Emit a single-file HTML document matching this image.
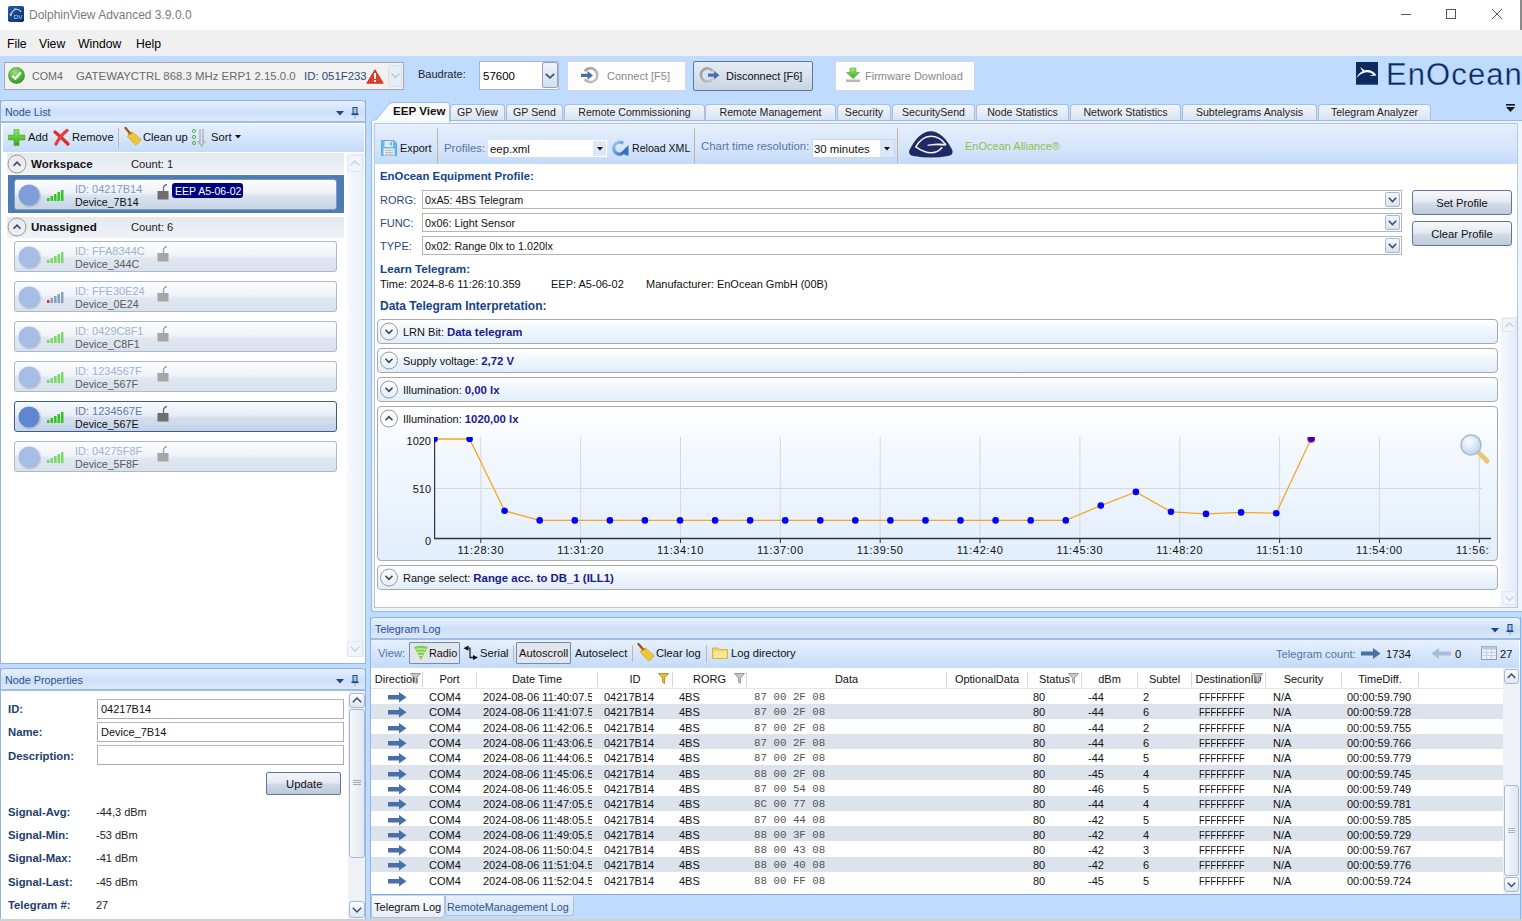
<!DOCTYPE html><html><head><meta charset="utf-8"><style>
*{margin:0;padding:0;box-sizing:border-box}
html,body{width:1522px;height:921px;overflow:hidden;background:#bfdbff;font-family:"Liberation Sans",sans-serif;font-size:11px;color:#000}
div{position:absolute}
.t{white-space:nowrap;line-height:14px;height:14px}
.b{font-weight:bold}
.blue{color:#15428b}
svg{position:absolute;overflow:visible}
</style></head><body><div style="left:0px;top:0px;width:1522px;height:30px;background:#fff"></div><div style="left:1520px;top:0px;width:2px;height:30px;background:#8a8a8a"></div><svg style="left:8px;top:6px" width="16" height="16" viewBox="0 0 16 16"><defs><linearGradient id="gic" x1="0" y1="0" x2="1" y2="1"><stop offset="0" stop-color="#2a5aa0"/><stop offset="1" stop-color="#00307a"/></linearGradient></defs><path d="M1.3 0 H14.7 L16 1.3 V14.7 L14.7 16 H1.3 L0 14.7 V1.3 Z" fill="url(#gic)"/><path d="M2.5 8.8 Q5.5 3 9 3.3 Q12 3.6 13 6" fill="none" stroke="#dfe8f4" stroke-width="1.1"/><path d="M1.3 8.5 L3.8 8 L3.2 10.5 Z" fill="#dfe8f4"/><path d="M6.5 2.5 L8 3.5" stroke="#dfe8f4" stroke-width="1"/><text x="5.8" y="13.3" font-size="6.2" fill="#d0ddf0" font-family="Liberation Sans">DV</text></svg><div class="t" style="left:29px;top:8px;font-size:12px;color:#7a7a7a">DolphinView Advanced 3.9.0.0</div><div style="left:1401px;top:14px;width:10px;height:1px;background:#555"></div><div style="left:1446px;top:9px;width:10px;height:10px;border:1px solid #555"></div><svg style="left:1492px;top:9px" width="10" height="10"><path d="M0 0 L10 10 M10 0 L0 10" stroke="#555" stroke-width="1"/></svg><div style="left:0px;top:30px;width:1522px;height:26px;background:#f0f0f0"></div><div class="t" style="left:7px;top:36.5px;font-size:12.2px;color:#000">File</div><div class="t" style="left:39px;top:36.5px;font-size:12.2px;color:#000">View</div><div class="t" style="left:78px;top:36.5px;font-size:12.2px;color:#000">Window</div><div class="t" style="left:136px;top:36.5px;font-size:12.2px;color:#000">Help</div><div style="left:4px;top:62px;width:400px;height:28px;background:#f1f1f1;border:1px solid #a9a9a9"></div><svg style="left:8px;top:67px" width="17" height="17" viewBox="0 0 17 17"><defs><radialGradient id="gck" cx="0.4" cy="0.3" r="0.7"><stop offset="0" stop-color="#9de07a"/><stop offset="1" stop-color="#2e9e1e"/></radialGradient></defs><circle cx="8.5" cy="8.5" r="8" fill="url(#gck)" stroke="#3a8a2a" stroke-width="0.6"/><path d="M4.2 8.8 L7.3 11.6 L12.8 5.6" fill="none" stroke="#fff" stroke-width="2.2"/></svg><div class="t" style="left:32px;top:69px;color:#6a6a6a;font-size:10.7px">COM4</div><div class="t" style="left:76px;top:69px;color:#6a6a6a;font-size:11.4px">GATEWAYCTRL 868.3 MHz ERP1 2.15.0.0</div><div class="t" style="left:304px;top:69px;color:#2a4a80;font-size:11.4px">ID: 051F233</div><svg style="left:366px;top:69px" width="18" height="15" viewBox="0 0 18 15"><path d="M9 0.8 L17.2 14.2 L0.8 14.2 Z" fill="#e8382c" stroke="#c01a12" stroke-width="0.8" stroke-linejoin="round"/><rect x="8" y="4" width="2" height="6" fill="#fff"/><rect x="8" y="11" width="2" height="2" fill="#fff"/></svg><div style="left:388px;top:65px;width:14px;height:22px;background:#e6edf7;border:1px solid #d5deea;border-radius:2px"></div><svg style="left:391px;top:73px" width="9" height="6"><path d="M0.5 0.5 L4.5 4.5 L8.5 0.5" fill="none" stroke="#b8c4d4" stroke-width="1.3"/></svg><div class="t" style="left:418px;top:66.5px;color:#1e1e1e;font-size:11px">Baudrate:</div><div style="left:479px;top:61px;width:80px;height:29px;background:#fff;border:1px solid #a9b6c8"></div><div class="t" style="left:483px;top:69px;font-size:11.5px">57600</div><div style="left:542px;top:62px;width:16px;height:26px;background:linear-gradient(#eef3fa,#d3dff0);border:1px solid #8ea3c0;border-radius:2px"></div><svg style="left:545px;top:73px" width="10" height="6"><path d="M0.8 0.8 L5 4.8 L9.2 0.8" fill="none" stroke="#3c4e6a" stroke-width="1.6"/></svg><div style="left:567px;top:61px;width:119px;height:30px;background:#fdfdfe;border:1px solid #d3d9e2;border-radius:2px"></div><svg style="left:0;top:0" width="1522" height="100"><defs><linearGradient id="gring" x1="0" y1="0" x2="1" y2="1"><stop offset="0" stop-color="#9a9a9a"/><stop offset="1" stop-color="#c8c8c8"/></linearGradient></defs><path d="M584.75 71.24 A6.9 6.9 0 1 1 584.75 79.16" fill="none" stroke="url(#gring)" stroke-width="2.6"/><path d="M581 73.8 H587.5 V71 L593 75.4 L587.5 79.8 V77 H581 Z" fill="#4a70ac"/></svg><div class="t" style="left:607px;top:69px;color:#8a8a8a;font-size:11px">Connect [F5]</div><div style="left:693px;top:61px;width:120px;height:30px;background:linear-gradient(#e6ecf4,#c9d5e6);border:1px solid #5d7699;border-radius:2px"></div><svg style="left:0;top:0" width="1522" height="100"><path d="M712.91 78.79 A6.6 6.6 0 1 1 712.91 71.21" fill="none" stroke="url(#gring)" stroke-width="2.6"/><path d="M708 73.6 H714 V70.8 L719.5 75.2 L714 79.6 V76.8 H708 Z" fill="#4a70ac"/></svg><div class="t" style="left:726px;top:69px;color:#111;font-size:11px">Disconnect [F6]</div><div style="left:835px;top:61px;width:140px;height:30px;background:#fdfdfe;border:1px solid #d3d9e2;border-radius:2px"></div><svg style="left:845px;top:67px" width="16" height="16" viewBox="0 0 16 16"><defs><linearGradient id="gfw" x1="0" y1="0" x2="0" y2="1"><stop offset="0" stop-color="#a8e878"/><stop offset="1" stop-color="#3aa820"/></linearGradient></defs><path d="M5 1 L11 1 L11 5.5 L14.5 5.5 L8 11.5 L1.5 5.5 L5 5.5 Z" fill="url(#gfw)" stroke="#3a9a22" stroke-width="0.5"/><rect x="1" y="12.5" width="14" height="2.5" fill="#b8b8b8"/></svg><div class="t" style="left:865px;top:69px;color:#8a8a8a;font-size:11px">Firmware Download</div><svg style="left:1356px;top:62px" width="23" height="23" viewBox="0 0 23 23"><rect x="0" y="0" width="22" height="22.7" fill="#0a2a60"/><path d="M0.3 16.5 Q3 9 10 8 Q17 7.5 20.5 13.5 L14 14 Q15.5 12.5 17.5 12.5 Q13.5 9.5 9 10.5 Q3.5 12 0.3 16.5 Z" fill="#fff"/><path d="M4 5 L9 8.5 L6.5 9.2 Z" fill="#fff"/></svg><div class="t" style="left:1386px;top:57.5px;height:34px;line-height:34px;font-size:31px;color:#0a2a60;letter-spacing:1.1px;-webkit-text-stroke:0.35px #bfdbff">EnOcean</div><div style="left:0px;top:100px;width:366px;height:564px;background:#fff;border:1px solid #92b4e0;border-top:none"></div><div style="left:0px;top:100px;width:366px;height:23px;background:linear-gradient(#e6f0fd 0%,#dae8fb 30%,#cddff8 55%,#dbe8fa 100%);border:1px solid #8fb1dd;border-bottom:2px solid #9dbde6;border-radius:4px 4px 0 0"></div><div class="t" style="left:5px;top:105px;color:#2d5590;font-size:10.8px">Node List</div><svg style="left:336px;top:111px" width="8" height="5"><path d="M0 0 L8 0 L4 4.5 Z" fill="#1d4a85"/></svg><svg style="left:351px;top:107px" width="8" height="12"><rect x="2" y="0.5" width="4" height="6.5" fill="#a9c1e0" stroke="#1d4a85" stroke-width="1"/><rect x="0.5" y="6.5" width="7" height="1.6" fill="#1d4a85"/><rect x="3.6" y="8" width="0.9" height="3.5" fill="#8fa6c4"/></svg><div style="left:3px;top:124px;width:361px;height:28px;background:linear-gradient(#e7f0fd,#c4dbf8)"></div><svg style="left:8px;top:129px" width="18" height="17" viewBox="0 0 18 17"><defs><linearGradient id="gpl" x1="0" y1="0" x2="0" y2="1"><stop offset="0" stop-color="#8ee85a"/><stop offset="1" stop-color="#36a81c"/></linearGradient></defs><path d="M6 0.5 H11 V6 H17 V11 H11 V16.5 H6 V11 H0.5 V6 H6 Z" fill="url(#gpl)" stroke="#3a9a22" stroke-width="0.5"/></svg><div class="t" style="left:28px;top:130px;font-size:11.2px;color:#111">Add</div><svg style="left:53px;top:129px" width="17" height="17" viewBox="0 0 17 17"><path d="M2 3 Q8 8 15 15" stroke="#e02a2a" stroke-width="3.2" fill="none" stroke-linecap="round"/><path d="M14 1.5 Q7 7 3 15" stroke="#e83a3a" stroke-width="3.2" fill="none" stroke-linecap="round"/></svg><div class="t" style="left:72px;top:130px;font-size:11.2px;color:#111">Remove</div><div style="left:118px;top:128px;width:1px;height:21px;background:#c8b896"></div><svg style="left:124px;top:127px" width="18" height="19" viewBox="0 0 18 19"><path d="M1.5 1 L7 7.5" stroke="#9a5a1a" stroke-width="2.4" stroke-linecap="round"/><path d="M5 6.5 L8.5 5 L17 12.5 Q15 16.5 11.5 18 L3.5 9.5 Z" fill="#f2cc38" stroke="#b8901a" stroke-width="0.6"/><path d="M6 10 L13 16 M8 8 L15 14" stroke="#d8a820" stroke-width="0.6"/><path d="M4.5 7.5 L8 5.8" stroke="#d05a20" stroke-width="1.3"/></svg><div class="t" style="left:143px;top:130px;font-size:11.2px;color:#111">Clean up</div><svg style="left:191px;top:128px" width="17" height="19" viewBox="0 0 17 19"><circle cx="3" cy="3" r="1.6" fill="none" stroke="#5ab43c" stroke-width="1"/><circle cx="3" cy="9" r="1.6" fill="none" stroke="#5ab43c" stroke-width="1"/><circle cx="3" cy="15" r="1.6" fill="none" stroke="#5ab43c" stroke-width="1"/><path d="M9 1 V14 M12 1 V14" stroke="#b0b0b0" stroke-width="1.4"/><path d="M7 13 L10.5 18 L14 13" fill="none" stroke="#b0b0b0" stroke-width="1.4"/></svg><div class="t" style="left:211px;top:130px;font-size:11.2px;color:#111">Sort</div><svg style="left:235px;top:135px" width="6" height="4"><path d="M0 0 L6 0 L3 3.5 Z" fill="#111"/></svg><div style="left:7px;top:153px;width:337px;height:21px;background:linear-gradient(#e4e9f0,#eef2f7)"></div><svg style="left:0;top:0" width="1522" height="921"><circle cx="17" cy="164" r="9" fill="none" stroke="#9a9a9a" stroke-width="1"/><path d="M13.5 165.8 L17 162.2 L20.5 165.8" fill="none" stroke="#444" stroke-width="1.6"/></svg><div class="t" style="left:31px;top:157px;font-weight:bold;font-size:11.6px;color:#111">Workspace</div><div class="t" style="left:131px;top:157px;font-size:11.2px;color:#222">Count: 1</div><div style="left:7px;top:217px;width:337px;height:21px;background:linear-gradient(#e4e9f0,#eef2f7)"></div><svg style="left:0;top:0" width="1522" height="921"><circle cx="17" cy="227" r="9" fill="none" stroke="#9a9a9a" stroke-width="1"/><path d="M13.5 228.8 L17 225.2 L20.5 228.8" fill="none" stroke="#444" stroke-width="1.6"/></svg><div class="t" style="left:31px;top:220px;font-weight:bold;font-size:11.6px;color:#111">Unassigned</div><div class="t" style="left:131px;top:220px;font-size:11.2px;color:#222">Count: 6</div><div style="left:8px;top:175px;width:336px;height:38px;background:#4e7bb4"></div><div style="left:14px;top:179px;width:323px;height:31px;background:linear-gradient(#fbfcfe 0%,#eef2f8 45%,#d9e2ee 55%,#c8d4e4 100%);border:1px solid #7d9ac2;border-radius:3px"></div><svg style="left:18px;top:184px" width="24" height="24"><defs><filter id="sh179" x="-20%" y="-20%" width="150%" height="150%"><feDropShadow dx="1" dy="1" stdDeviation="0.8" flood-color="#7a8aa0" flood-opacity="0.6"/></filter></defs><circle cx="11" cy="11" r="10.5" fill="#7f9fd8" filter="url(#sh179)"/></svg><svg style="left:47px;top:189px" width="18" height="12"><rect x="0.0" y="9" width="2.5" height="3" fill="#30c820"/><rect x="3.5" y="7" width="2.5" height="5" fill="#30c820"/><rect x="7.0" y="5" width="2.5" height="7" fill="#30c820"/><rect x="10.5" y="3" width="2.5" height="9" fill="#30c820"/><rect x="14.0" y="1" width="2.5" height="11" fill="#30c820"/></svg><div class="t" style="left:75px;top:181.5px;color:#8199c2;font-size:11px">ID: 04217B14</div><div class="t" style="left:75px;top:194.5px;color:#111;font-size:10.7px">Device_7B14</div><svg style="left:157px;top:184px" width="12" height="16" viewBox="0 0 12 16"><path d="M6.5 7 V3.5 Q7 1 10 0.5" fill="none" stroke="#6e6e6e" stroke-width="1.3"/><rect x="0.5" y="7" width="11" height="8.5" fill="#6e6e6e"/></svg><div style="left:172px;top:183px;width:71px;height:15px;background:#00007f;border-radius:3px"></div><div class="t" style="left:175px;top:183.5px;color:#fff;font-size:10.5px">EEP A5-06-02</div><div style="left:14px;top:241px;width:323px;height:31px;background:linear-gradient(#fbfcfe 0%,#f1f4f9 45%,#e2e8f1 55%,#d9e1ec 100%);border:1px solid #a9b9d0;border-radius:3px"></div><svg style="left:18px;top:246px" width="24" height="24"><defs><filter id="sh241" x="-20%" y="-20%" width="150%" height="150%"><feDropShadow dx="1" dy="1" stdDeviation="0.8" flood-color="#7a8aa0" flood-opacity="0.6"/></filter></defs><circle cx="11" cy="11" r="10.5" fill="#a6bde6" filter="url(#sh241)"/></svg><svg style="left:47px;top:251px" width="18" height="12"><rect x="0.0" y="9" width="2.5" height="3" fill="#7ad86a"/><rect x="3.5" y="7" width="2.5" height="5" fill="#7ad86a"/><rect x="7.0" y="5" width="2.5" height="7" fill="#7ad86a"/><rect x="10.5" y="3" width="2.5" height="9" fill="#7ad86a"/><rect x="14.0" y="1" width="2.5" height="11" fill="#7ad86a"/></svg><div class="t" style="left:75px;top:243.5px;color:#a0b2d0;font-size:11px">ID: FFA8344C</div><div class="t" style="left:75px;top:256.5px;color:#5a5a5a;font-size:10.7px">Device_344C</div><svg style="left:157px;top:246px" width="12" height="16" viewBox="0 0 12 16"><path d="M6.5 7 V3.5 Q7 1 10 0.5" fill="none" stroke="#a6a6a6" stroke-width="1.3"/><rect x="0.5" y="7" width="11" height="8.5" fill="#a6a6a6"/></svg><div style="left:14px;top:281px;width:323px;height:31px;background:linear-gradient(#fbfcfe 0%,#f1f4f9 45%,#e2e8f1 55%,#d9e1ec 100%);border:1px solid #a9b9d0;border-radius:3px"></div><svg style="left:18px;top:286px" width="24" height="24"><defs><filter id="sh281" x="-20%" y="-20%" width="150%" height="150%"><feDropShadow dx="1" dy="1" stdDeviation="0.8" flood-color="#7a8aa0" flood-opacity="0.6"/></filter></defs><circle cx="11" cy="11" r="10.5" fill="#a6bde6" filter="url(#sh281)"/></svg><svg style="left:47px;top:291px" width="18" height="12"><rect x="0.0" y="9" width="2.5" height="3" fill="#e03030"/><rect x="3.5" y="7" width="2.5" height="5" fill="#8aa0c0"/><rect x="7.0" y="5" width="2.5" height="7" fill="#8aa0c0"/><rect x="10.5" y="3" width="2.5" height="9" fill="#8aa0c0"/><rect x="14.0" y="1" width="2.5" height="11" fill="#8aa0c0"/></svg><div class="t" style="left:75px;top:283.5px;color:#a0b2d0;font-size:11px">ID: FFE30E24</div><div class="t" style="left:75px;top:296.5px;color:#5a5a5a;font-size:10.7px">Device_0E24</div><svg style="left:157px;top:286px" width="12" height="16" viewBox="0 0 12 16"><path d="M6.5 7 V3.5 Q7 1 10 0.5" fill="none" stroke="#a6a6a6" stroke-width="1.3"/><rect x="0.5" y="7" width="11" height="8.5" fill="#a6a6a6"/></svg><div style="left:14px;top:321px;width:323px;height:31px;background:linear-gradient(#fbfcfe 0%,#f1f4f9 45%,#e2e8f1 55%,#d9e1ec 100%);border:1px solid #a9b9d0;border-radius:3px"></div><svg style="left:18px;top:326px" width="24" height="24"><defs><filter id="sh321" x="-20%" y="-20%" width="150%" height="150%"><feDropShadow dx="1" dy="1" stdDeviation="0.8" flood-color="#7a8aa0" flood-opacity="0.6"/></filter></defs><circle cx="11" cy="11" r="10.5" fill="#a6bde6" filter="url(#sh321)"/></svg><svg style="left:47px;top:331px" width="18" height="12"><rect x="0.0" y="9" width="2.5" height="3" fill="#7ad86a"/><rect x="3.5" y="7" width="2.5" height="5" fill="#7ad86a"/><rect x="7.0" y="5" width="2.5" height="7" fill="#7ad86a"/><rect x="10.5" y="3" width="2.5" height="9" fill="#7ad86a"/><rect x="14.0" y="1" width="2.5" height="11" fill="#7ad86a"/></svg><div class="t" style="left:75px;top:323.5px;color:#a0b2d0;font-size:11px">ID: 0429C8F1</div><div class="t" style="left:75px;top:336.5px;color:#5a5a5a;font-size:10.7px">Device_C8F1</div><svg style="left:157px;top:326px" width="12" height="16" viewBox="0 0 12 16"><path d="M6.5 7 V3.5 Q7 1 10 0.5" fill="none" stroke="#a6a6a6" stroke-width="1.3"/><rect x="0.5" y="7" width="11" height="8.5" fill="#a6a6a6"/></svg><div style="left:14px;top:361px;width:323px;height:31px;background:linear-gradient(#fbfcfe 0%,#f1f4f9 45%,#e2e8f1 55%,#d9e1ec 100%);border:1px solid #a9b9d0;border-radius:3px"></div><svg style="left:18px;top:366px" width="24" height="24"><defs><filter id="sh361" x="-20%" y="-20%" width="150%" height="150%"><feDropShadow dx="1" dy="1" stdDeviation="0.8" flood-color="#7a8aa0" flood-opacity="0.6"/></filter></defs><circle cx="11" cy="11" r="10.5" fill="#a6bde6" filter="url(#sh361)"/></svg><svg style="left:47px;top:371px" width="18" height="12"><rect x="0.0" y="9" width="2.5" height="3" fill="#7ad86a"/><rect x="3.5" y="7" width="2.5" height="5" fill="#7ad86a"/><rect x="7.0" y="5" width="2.5" height="7" fill="#7ad86a"/><rect x="10.5" y="3" width="2.5" height="9" fill="#7ad86a"/><rect x="14.0" y="1" width="2.5" height="11" fill="#7ad86a"/></svg><div class="t" style="left:75px;top:363.5px;color:#a0b2d0;font-size:11px">ID: 1234567F</div><div class="t" style="left:75px;top:376.5px;color:#5a5a5a;font-size:10.7px">Device_567F</div><svg style="left:157px;top:366px" width="12" height="16" viewBox="0 0 12 16"><path d="M6.5 7 V3.5 Q7 1 10 0.5" fill="none" stroke="#a6a6a6" stroke-width="1.3"/><rect x="0.5" y="7" width="11" height="8.5" fill="#a6a6a6"/></svg><div style="left:14px;top:401px;width:323px;height:31px;background:linear-gradient(#f6f9fd 0%,#e8eef7 45%,#d4dfee 55%,#c4d3e8 100%);border:1px solid #3d5c8c;border-radius:3px"></div><svg style="left:18px;top:406px" width="24" height="24"><defs><filter id="sh401" x="-20%" y="-20%" width="150%" height="150%"><feDropShadow dx="1" dy="1" stdDeviation="0.8" flood-color="#7a8aa0" flood-opacity="0.6"/></filter></defs><circle cx="11" cy="11" r="10.5" fill="#5f86d0" filter="url(#sh401)"/></svg><svg style="left:47px;top:411px" width="18" height="12"><rect x="0.0" y="9" width="2.5" height="3" fill="#30c820"/><rect x="3.5" y="7" width="2.5" height="5" fill="#30c820"/><rect x="7.0" y="5" width="2.5" height="7" fill="#30c820"/><rect x="10.5" y="3" width="2.5" height="9" fill="#30c820"/><rect x="14.0" y="1" width="2.5" height="11" fill="#30c820"/></svg><div class="t" style="left:75px;top:403.5px;color:#5a78a8;font-size:11px">ID: 1234567E</div><div class="t" style="left:75px;top:416.5px;color:#111;font-size:10.7px">Device_567E</div><svg style="left:157px;top:406px" width="12" height="16" viewBox="0 0 12 16"><path d="M6.5 7 V3.5 Q7 1 10 0.5" fill="none" stroke="#6e6e6e" stroke-width="1.3"/><rect x="0.5" y="7" width="11" height="8.5" fill="#6e6e6e"/></svg><div style="left:14px;top:441px;width:323px;height:31px;background:linear-gradient(#fbfcfe 0%,#f1f4f9 45%,#e2e8f1 55%,#d9e1ec 100%);border:1px solid #a9b9d0;border-radius:3px"></div><svg style="left:18px;top:446px" width="24" height="24"><defs><filter id="sh441" x="-20%" y="-20%" width="150%" height="150%"><feDropShadow dx="1" dy="1" stdDeviation="0.8" flood-color="#7a8aa0" flood-opacity="0.6"/></filter></defs><circle cx="11" cy="11" r="10.5" fill="#a6bde6" filter="url(#sh441)"/></svg><svg style="left:47px;top:451px" width="18" height="12"><rect x="0.0" y="9" width="2.5" height="3" fill="#7ad86a"/><rect x="3.5" y="7" width="2.5" height="5" fill="#7ad86a"/><rect x="7.0" y="5" width="2.5" height="7" fill="#7ad86a"/><rect x="10.5" y="3" width="2.5" height="9" fill="#7ad86a"/><rect x="14.0" y="1" width="2.5" height="11" fill="#7ad86a"/></svg><div class="t" style="left:75px;top:443.5px;color:#a0b2d0;font-size:11px">ID: 04275F8F</div><div class="t" style="left:75px;top:456.5px;color:#5a5a5a;font-size:10.7px">Device_5F8F</div><svg style="left:157px;top:446px" width="12" height="16" viewBox="0 0 12 16"><path d="M6.5 7 V3.5 Q7 1 10 0.5" fill="none" stroke="#a6a6a6" stroke-width="1.3"/><rect x="0.5" y="7" width="11" height="8.5" fill="#a6a6a6"/></svg><div style="left:347px;top:153px;width:17px;height:504px;background:linear-gradient(90deg,#f7f9fd,#e9eff8)"></div><div style="left:347px;top:155px;width:16px;height:17px;background:#f1f5fb;border:1px solid #dde6f2;border-radius:2px"></div><svg style="left:350px;top:160px" width="10" height="6"><path d="M0.5 5.5 L5 1 L9.5 5.5" fill="none" stroke="#c5d2e4" stroke-width="1.4"/></svg><div style="left:347px;top:641px;width:16px;height:16px;background:#f1f5fb;border:1px solid #dde6f2;border-radius:2px"></div><svg style="left:350px;top:646px" width="10" height="6"><path d="M0.5 0.5 L5 5 L9.5 0.5" fill="none" stroke="#c5d2e4" stroke-width="1.4"/></svg><div style="left:0px;top:668px;width:366px;height:253px;background:#fff;border:1px solid #92b4e0;border-top:none"></div><div style="left:0px;top:668px;width:366px;height:23px;background:linear-gradient(#e6f0fd 0%,#dae8fb 30%,#cddff8 55%,#dbe8fa 100%);border:1px solid #8fb1dd;border-bottom:2px solid #9dbde6;border-radius:4px 4px 0 0"></div><div class="t" style="left:5px;top:673px;color:#2d5590;font-size:10.8px">Node Properties</div><svg style="left:336px;top:679px" width="8" height="5"><path d="M0 0 L8 0 L4 4.5 Z" fill="#1d4a85"/></svg><svg style="left:351px;top:675px" width="8" height="12"><rect x="2" y="0.5" width="4" height="6.5" fill="#a9c1e0" stroke="#1d4a85" stroke-width="1"/><rect x="0.5" y="6.5" width="7" height="1.6" fill="#1d4a85"/><rect x="3.6" y="8" width="0.9" height="3.5" fill="#8fa6c4"/></svg><div class="t" style="left:8px;top:702px;font-weight:bold;font-size:11.3px;color:#1e3e6e">ID:</div><div class="t" style="left:8px;top:725px;font-weight:bold;font-size:11.3px;color:#1e3e6e">Name:</div><div class="t" style="left:8px;top:748.5px;font-weight:bold;font-size:11.3px;color:#1e3e6e">Description:</div><div style="left:97px;top:699px;width:247px;height:20px;background:#fff;border:1px solid #abadb3;border-top-color:#b5b8c0"></div><div class="t" style="left:101px;top:702.0px;font-size:11px;color:#111">04217B14</div><div style="left:97px;top:722px;width:247px;height:20px;background:#fff;border:1px solid #abadb3;border-top-color:#b5b8c0"></div><div class="t" style="left:101px;top:725.0px;font-size:11px;color:#111">Device_7B14</div><div style="left:97px;top:745px;width:247px;height:20px;background:#fff;border:1px solid #abadb3;border-top-color:#b5b8c0"></div><div style="left:266px;top:772px;width:75px;height:23px;background:linear-gradient(#f4f6fa 0%,#e5eaf2 45%,#cfd9e6 55%,#bccadc 100%);border:1px solid #5d7699;border-radius:2px"></div><div class="t" style="left:286px;top:776.5px;font-size:11.3px;color:#111">Update</div><div class="t" style="left:8px;top:805px;font-weight:bold;font-size:11.3px;color:#1e3e6e">Signal-Avg:</div><div class="t" style="left:96px;top:805px;font-size:11px;color:#222">-44,3 dBm</div><div class="t" style="left:8px;top:828px;font-weight:bold;font-size:11.3px;color:#1e3e6e">Signal-Min:</div><div class="t" style="left:96px;top:828px;font-size:11px;color:#222">-53 dBm</div><div class="t" style="left:8px;top:851px;font-weight:bold;font-size:11.3px;color:#1e3e6e">Signal-Max:</div><div class="t" style="left:96px;top:851px;font-size:11px;color:#222">-41 dBm</div><div class="t" style="left:8px;top:875px;font-weight:bold;font-size:11.3px;color:#1e3e6e">Signal-Last:</div><div class="t" style="left:96px;top:875px;font-size:11px;color:#222">-45 dBm</div><div class="t" style="left:8px;top:898px;font-weight:bold;font-size:11.3px;color:#1e3e6e">Telegram #:</div><div class="t" style="left:96px;top:898px;font-size:11px;color:#222">27</div><div style="left:348px;top:691px;width:17px;height:229px;background:#eef2f7"></div><div style="left:349px;top:693px;width:16px;height:15px;background:linear-gradient(#fbfcfe,#dde6f2);border:1px solid #a9b9d0;border-radius:3px"></div><svg style="left:352px;top:697px" width="10" height="6"><path d="M0.8 5.2 L5 1 L9.2 5.2" fill="none" stroke="#3c4e6a" stroke-width="1.5"/></svg><div style="left:349px;top:709px;width:16px;height:149px;background:linear-gradient(90deg,#f6f8fc,#dfe7f2);border:1px solid #a9b9d0;border-radius:3px"></div><svg style="left:353px;top:780px" width="8" height="6"><path d="M0 0.5 H8 M0 2.5 H8 M0 4.5 H8" stroke="#8a9ab0" stroke-width="0.8"/></svg><div style="left:349px;top:901px;width:16px;height:17px;background:linear-gradient(#fbfcfe,#dde6f2);border:1px solid #a9b9d0;border-radius:3px"></div><svg style="left:352px;top:907px" width="10" height="6"><path d="M0.8 0.8 L5 5 L9.2 0.8" fill="none" stroke="#3c4e6a" stroke-width="1.5"/></svg><div style="left:450px;top:104px;width:55px;height:17px;background:linear-gradient(#f2f6fc 0%,#e4ecf8 50%,#d6e2f3 100%);border:1px solid #a5bfdf;border-bottom:none;border-radius:4px 4px 0 0"></div><div class="t" style="left:450px;top:105px;width:55px;text-align:center;font-size:10.6px;color:#1e1e1e;line-height:15px">GP View</div><div style="left:506px;top:104px;width:57px;height:17px;background:linear-gradient(#f2f6fc 0%,#e4ecf8 50%,#d6e2f3 100%);border:1px solid #a5bfdf;border-bottom:none;border-radius:4px 4px 0 0"></div><div class="t" style="left:506px;top:105px;width:57px;text-align:center;font-size:10.6px;color:#1e1e1e;line-height:15px">GP Send</div><div style="left:564px;top:104px;width:141px;height:17px;background:linear-gradient(#f2f6fc 0%,#e4ecf8 50%,#d6e2f3 100%);border:1px solid #a5bfdf;border-bottom:none;border-radius:4px 4px 0 0"></div><div class="t" style="left:564px;top:105px;width:141px;text-align:center;font-size:10.6px;color:#1e1e1e;line-height:15px">Remote Commissioning</div><div style="left:705px;top:104px;width:131px;height:17px;background:linear-gradient(#f2f6fc 0%,#e4ecf8 50%,#d6e2f3 100%);border:1px solid #a5bfdf;border-bottom:none;border-radius:4px 4px 0 0"></div><div class="t" style="left:705px;top:105px;width:131px;text-align:center;font-size:10.6px;color:#1e1e1e;line-height:15px">Remote Management</div><div style="left:837px;top:104px;width:54px;height:17px;background:linear-gradient(#f2f6fc 0%,#e4ecf8 50%,#d6e2f3 100%);border:1px solid #a5bfdf;border-bottom:none;border-radius:4px 4px 0 0"></div><div class="t" style="left:837px;top:105px;width:54px;text-align:center;font-size:10.6px;color:#1e1e1e;line-height:15px">Security</div><div style="left:892px;top:104px;width:83px;height:17px;background:linear-gradient(#f2f6fc 0%,#e4ecf8 50%,#d6e2f3 100%);border:1px solid #a5bfdf;border-bottom:none;border-radius:4px 4px 0 0"></div><div class="t" style="left:892px;top:105px;width:83px;text-align:center;font-size:10.6px;color:#1e1e1e;line-height:15px">SecuritySend</div><div style="left:976px;top:104px;width:93px;height:17px;background:linear-gradient(#f2f6fc 0%,#e4ecf8 50%,#d6e2f3 100%);border:1px solid #a5bfdf;border-bottom:none;border-radius:4px 4px 0 0"></div><div class="t" style="left:976px;top:105px;width:93px;text-align:center;font-size:10.6px;color:#1e1e1e;line-height:15px">Node Statistics</div><div style="left:1070px;top:104px;width:111px;height:17px;background:linear-gradient(#f2f6fc 0%,#e4ecf8 50%,#d6e2f3 100%);border:1px solid #a5bfdf;border-bottom:none;border-radius:4px 4px 0 0"></div><div class="t" style="left:1070px;top:105px;width:111px;text-align:center;font-size:10.6px;color:#1e1e1e;line-height:15px">Network Statistics</div><div style="left:1182px;top:104px;width:135px;height:17px;background:linear-gradient(#f2f6fc 0%,#e4ecf8 50%,#d6e2f3 100%);border:1px solid #a5bfdf;border-bottom:none;border-radius:4px 4px 0 0"></div><div class="t" style="left:1182px;top:105px;width:135px;text-align:center;font-size:10.6px;color:#1e1e1e;line-height:15px">Subtelegrams Analysis</div><div style="left:1318px;top:104px;width:113px;height:17px;background:linear-gradient(#f2f6fc 0%,#e4ecf8 50%,#d6e2f3 100%);border:1px solid #a5bfdf;border-bottom:none;border-radius:4px 4px 0 0"></div><div class="t" style="left:1318px;top:105px;width:113px;text-align:center;font-size:10.6px;color:#1e1e1e;line-height:15px">Telegram Analyzer</div><div style="left:371px;top:120px;width:1151px;height:492px;background:#eef4fc;border:1px solid #9dbce3;border-right:none;border-radius:3px 0 0 3px"></div><svg style="left:370px;top:101px" width="82" height="22" viewBox="0 0 82 22"><path d="M1 21 Q2 19 6 19 L19 3 Q21 1.5 25 1.5 L76 1.5 Q79 1.5 79.5 4 L79.5 21 Z" fill="#fafcfe" stroke="#9dbce3" stroke-width="1"/><rect x="2" y="19.5" width="77" height="3" fill="#f4f8fd"/></svg><div class="t" style="left:393px;top:104px;font-weight:bold;font-size:11.6px;color:#111">EEP View</div><svg style="left:1506px;top:104px" width="9" height="9"><rect x="0" y="0" width="9" height="1.6" fill="#111"/><path d="M0 3 L9 3 L4.5 8 Z" fill="#111"/></svg><div style="left:374px;top:123px;width:1144px;height:485px;background:#fff;border:1px solid #b6c9e2"></div><div style="left:375px;top:124px;width:1142px;height:40px;background:linear-gradient(#e6effc 0%,#d5e5fb 60%,#c3dafa 100%)"></div><svg style="left:381px;top:140px" width="16" height="16" viewBox="0 0 16 16"><path d="M0.5 0.5 H13 L15.5 3 V15.5 H0.5 Z" fill="#62bdf0" stroke="#3a98d8" stroke-width="0.7"/><rect x="3.5" y="1" width="8.5" height="6" fill="#e4e6e8"/><rect x="9.3" y="2" width="1.6" height="3.5" fill="#5ab0e8"/><rect x="2.5" y="8.5" width="11" height="7" fill="#ececec"/><path d="M4 10.5 H12 M4 12.5 H12 M4 14.3 H12" stroke="#a8a8a8" stroke-width="0.7"/></svg><div class="t" style="left:400px;top:141px;font-size:10.9px;color:#111">Export</div><div style="left:437px;top:128px;width:1px;height:36px;background:#c6b79a"></div><div class="t" style="left:444px;top:140.5px;font-size:11.4px;color:#5476a6">Profiles:</div><div style="left:488px;top:140px;width:119px;height:17px;background:#fff"></div><div class="t" style="left:490px;top:141.5px;font-size:11.4px;color:#111">eep.xml</div><div style="left:593px;top:141px;width:13px;height:15px;background:#dbe7f7"></div><svg style="left:597px;top:147px" width="6" height="4"><path d="M0 0 L6 0 L3 3.5 Z" fill="#111"/></svg><svg style="left:0;top:0" width="1522" height="200"><defs><linearGradient id="grl" x1="0" y1="0" x2="1" y2="1"><stop offset="0" stop-color="#a8cdf0"/><stop offset="1" stop-color="#2a6ac0"/></linearGradient></defs><path d="M623.2 143.3 A6 6 0 1 0 624.8 151.2" fill="none" stroke="url(#grl)" stroke-width="3.2"/><path d="M620.5 153 L628.5 145 L628.5 156 Z" fill="#2f72c4"/></svg><div class="t" style="left:632px;top:141px;font-size:10.6px;color:#111">Reload XML</div><div style="left:694px;top:128px;width:1px;height:36px;background:#c6b79a"></div><div class="t" style="left:701px;top:139px;font-size:11.4px;color:#5476a6">Chart time resolution:</div><div style="left:812px;top:139px;width:83px;height:19px;background:#fff;border:1px solid #c9d8ec"></div><div class="t" style="left:814px;top:141.5px;font-size:11.4px;color:#111">30 minutes</div><div style="left:880px;top:140px;width:14px;height:17px;background:#dbe7f7"></div><svg style="left:884px;top:147px" width="6" height="4"><path d="M0 0 L6 0 L3 3.5 Z" fill="#111"/></svg><div style="left:897px;top:128px;width:1px;height:36px;background:#c6b79a"></div><svg style="left:0;top:0" width="1522" height="200"><path d="M909.5 150 Q919 131.2 930.7 131.2 Q942.5 131.2 952.3 150 Q954 155 948 156 Q931 159 913.5 156 Q907.5 155 909.5 150 Z" fill="#1e2a64"/><path d="M945.7 144.6 Q940 136.3 930.7 136.3 Q922 136.3 915.8 146.9 Q924 152.8 931.5 152.8 Q938 152.8 942.2 147.3" fill="none" stroke="#f2f2f2" stroke-width="1.6"/><path d="M927.6 145.2 Q936 143.2 945.9 144.2 L945.9 145.3 Q936 144.6 927.6 145.2 Z" fill="#f2f2f2" stroke="#f2f2f2" stroke-width="0.7"/></svg><div class="t" style="left:965px;top:139px;font-size:11px;color:#8fbf4a">EnOcean Alliance®</div><div class="t" style="left:380px;top:169px;font-weight:bold;font-size:11.4px;color:#15428b">EnOcean Equipment Profile:</div><div class="t" style="left:380px;top:192.5px;font-size:11px;color:#2a4a7a">RORG:</div><div style="left:422px;top:190px;width:980px;height:19px;background:#fff;border:1px solid #b4b4b4"></div><div class="t" style="left:425px;top:192.5px;font-size:10.8px;color:#111">0xA5: 4BS Telegram</div><div style="left:1385px;top:192px;width:15px;height:15px;background:linear-gradient(#f4f7fb,#d8e2ef);border:1px solid #a8b8cf;border-radius:2px"></div><svg style="left:1388px;top:197px" width="9" height="6"><path d="M0.8 0.8 L4.5 4.5 L8.2 0.8" fill="none" stroke="#3c4e6a" stroke-width="1.6"/></svg><div class="t" style="left:380px;top:215.5px;font-size:11px;color:#2a4a7a">FUNC:</div><div style="left:422px;top:213px;width:980px;height:19px;background:#fff;border:1px solid #b4b4b4"></div><div class="t" style="left:425px;top:215.5px;font-size:10.8px;color:#111">0x06: Light Sensor</div><div style="left:1385px;top:215px;width:15px;height:15px;background:linear-gradient(#f4f7fb,#d8e2ef);border:1px solid #a8b8cf;border-radius:2px"></div><svg style="left:1388px;top:220px" width="9" height="6"><path d="M0.8 0.8 L4.5 4.5 L8.2 0.8" fill="none" stroke="#3c4e6a" stroke-width="1.6"/></svg><div class="t" style="left:380px;top:238.5px;font-size:11px;color:#2a4a7a">TYPE:</div><div style="left:422px;top:236px;width:980px;height:19px;background:#fff;border:1px solid #b4b4b4"></div><div class="t" style="left:425px;top:238.5px;font-size:10.8px;color:#111">0x02: Range 0lx to 1.020lx</div><div style="left:1385px;top:238px;width:15px;height:15px;background:linear-gradient(#f4f7fb,#d8e2ef);border:1px solid #a8b8cf;border-radius:2px"></div><svg style="left:1388px;top:243px" width="9" height="6"><path d="M0.8 0.8 L4.5 4.5 L8.2 0.8" fill="none" stroke="#3c4e6a" stroke-width="1.6"/></svg><div style="left:1412px;top:190px;width:100px;height:25px;background:linear-gradient(#f6f8fb 0%,#e6ebf2 45%,#d2dbe7 55%,#bfcbdc 100%);border:1px solid #5d7699;border-radius:3px"></div><div class="t" style="left:1412px;top:195.5px;width:100px;text-align:center;font-size:11.2px;color:#111">Set Profile</div><div style="left:1412px;top:221px;width:100px;height:25px;background:linear-gradient(#f6f8fb 0%,#e6ebf2 45%,#d2dbe7 55%,#bfcbdc 100%);border:1px solid #5d7699;border-radius:3px"></div><div class="t" style="left:1412px;top:226.5px;width:100px;text-align:center;font-size:11.2px;color:#111">Clear Profile</div><div class="t" style="left:380px;top:262px;font-weight:bold;font-size:11.7px;color:#15428b">Learn Telegram:</div><div class="t" style="left:380px;top:277px;font-size:11px;color:#111">Time: 2024-8-6 11:26:10.359</div><div class="t" style="left:551px;top:277px;font-size:11px;color:#111">EEP: A5-06-02</div><div class="t" style="left:646px;top:277px;font-size:11px;color:#111">Manufacturer: EnOcean GmbH (00B)</div><div class="t" style="left:380px;top:299px;font-weight:bold;font-size:12px;color:#15428b">Data Telegram Interpretation:</div><div style="left:377px;top:319px;width:1121px;height:25px;background:linear-gradient(#ffffff 0%,#eef5fd 50%,#e2eefc 100%);border:1px solid #a9a9a9;border-radius:4px"></div><svg style="left:0;top:0" width="1522" height="921"><circle cx="389" cy="331.5" r="8.5" fill="none" stroke="#9a9a9a" stroke-width="1"/><path d="M385.5 329.7 L389 333.3 L392.5 329.7" fill="none" stroke="#444" stroke-width="1.6"/></svg><div class="t" style="left:403px;top:324.5px;font-size:11px;color:#111">LRN Bit: <span style="font-weight:bold;color:#1a1a8a;font-size:11.4px">Data telegram</span></div><div style="left:377px;top:348px;width:1121px;height:25px;background:linear-gradient(#ffffff 0%,#eef5fd 50%,#e2eefc 100%);border:1px solid #a9a9a9;border-radius:4px"></div><svg style="left:0;top:0" width="1522" height="921"><circle cx="389" cy="360.5" r="8.5" fill="none" stroke="#9a9a9a" stroke-width="1"/><path d="M385.5 358.7 L389 362.3 L392.5 358.7" fill="none" stroke="#444" stroke-width="1.6"/></svg><div class="t" style="left:403px;top:353.5px;font-size:11px;color:#111">Supply voltage: <span style="font-weight:bold;color:#1a1a8a;font-size:11.4px">2,72 V</span></div><div style="left:377px;top:377px;width:1121px;height:25px;background:linear-gradient(#ffffff 0%,#eef5fd 50%,#e2eefc 100%);border:1px solid #a9a9a9;border-radius:4px"></div><svg style="left:0;top:0" width="1522" height="921"><circle cx="389" cy="389.5" r="8.5" fill="none" stroke="#9a9a9a" stroke-width="1"/><path d="M385.5 387.7 L389 391.3 L392.5 387.7" fill="none" stroke="#444" stroke-width="1.6"/></svg><div class="t" style="left:403px;top:382.5px;font-size:11px;color:#111">Illumination: <span style="font-weight:bold;color:#1a1a8a;font-size:11.4px">0,00 lx</span></div><div style="left:377px;top:406px;width:1121px;height:155px;background:linear-gradient(#ffffff 0%,#f3f8fe 30%,#e2eefc 100%);border:1px solid #a9a9a9;border-radius:4px"></div><svg style="left:0;top:0" width="1522" height="921"><circle cx="389" cy="418.5" r="8.5" fill="none" stroke="#9a9a9a" stroke-width="1"/><path d="M385.5 420.3 L389 416.7 L392.5 420.3" fill="none" stroke="#444" stroke-width="1.6"/></svg><div class="t" style="left:403px;top:411.5px;font-size:11px;color:#111">Illumination: <span style="font-weight:bold;color:#1a1a8a;font-size:11.4px">1020,00 lx</span></div><div style="left:377px;top:565px;width:1121px;height:25px;background:linear-gradient(#ffffff 0%,#eef5fd 50%,#e2eefc 100%);border:1px solid #a9a9a9;border-radius:4px"></div><svg style="left:0;top:0" width="1522" height="921"><circle cx="389" cy="577.5" r="8.5" fill="none" stroke="#9a9a9a" stroke-width="1"/><path d="M385.5 575.7 L389 579.3 L392.5 575.7" fill="none" stroke="#444" stroke-width="1.6"/></svg><div class="t" style="left:403px;top:570.5px;font-size:11px;color:#111">Range select: <span style="font-weight:bold;color:#1a1a8a;font-size:11.4px">Range acc. to DB_1 (ILL1)</span></div><div style="left:0;top:0;width:1522px;height:921px;overflow:hidden;clip-path:inset(437px 0 0 434px)"><svg style="left:0;top:0" width="1522" height="921"><line x1="480.8" y1="437" x2="480.8" y2="538" stroke="#d8d8d8" stroke-width="1"/><line x1="480.8" y1="538" x2="480.8" y2="543" stroke="#333" stroke-width="1"/><line x1="580.65" y1="437" x2="580.65" y2="538" stroke="#d8d8d8" stroke-width="1"/><line x1="580.65" y1="538" x2="580.65" y2="543" stroke="#333" stroke-width="1"/><line x1="680.5" y1="437" x2="680.5" y2="538" stroke="#d8d8d8" stroke-width="1"/><line x1="680.5" y1="538" x2="680.5" y2="543" stroke="#333" stroke-width="1"/><line x1="780.3499999999999" y1="437" x2="780.3499999999999" y2="538" stroke="#d8d8d8" stroke-width="1"/><line x1="780.3499999999999" y1="538" x2="780.3499999999999" y2="543" stroke="#333" stroke-width="1"/><line x1="880.2" y1="437" x2="880.2" y2="538" stroke="#d8d8d8" stroke-width="1"/><line x1="880.2" y1="538" x2="880.2" y2="543" stroke="#333" stroke-width="1"/><line x1="980.05" y1="437" x2="980.05" y2="538" stroke="#d8d8d8" stroke-width="1"/><line x1="980.05" y1="538" x2="980.05" y2="543" stroke="#333" stroke-width="1"/><line x1="1079.8999999999999" y1="437" x2="1079.8999999999999" y2="538" stroke="#d8d8d8" stroke-width="1"/><line x1="1079.8999999999999" y1="538" x2="1079.8999999999999" y2="543" stroke="#333" stroke-width="1"/><line x1="1179.75" y1="437" x2="1179.75" y2="538" stroke="#d8d8d8" stroke-width="1"/><line x1="1179.75" y1="538" x2="1179.75" y2="543" stroke="#333" stroke-width="1"/><line x1="1279.6" y1="437" x2="1279.6" y2="538" stroke="#d8d8d8" stroke-width="1"/><line x1="1279.6" y1="538" x2="1279.6" y2="543" stroke="#333" stroke-width="1"/><line x1="1379.45" y1="437" x2="1379.45" y2="538" stroke="#d8d8d8" stroke-width="1"/><line x1="1379.45" y1="538" x2="1379.45" y2="543" stroke="#333" stroke-width="1"/><line x1="1479.3" y1="437" x2="1479.3" y2="538" stroke="#d8d8d8" stroke-width="1"/><line x1="1479.3" y1="538" x2="1479.3" y2="543" stroke="#333" stroke-width="1"/><line x1="435" y1="488.5" x2="1482" y2="488.5" stroke="#d8d8d8" stroke-width="1"/><line x1="434.5" y1="434" x2="434.5" y2="539" stroke="#333" stroke-width="1.4"/><line x1="434" y1="538.5" x2="1491" y2="538.5" stroke="#333" stroke-width="1.4"/><polyline points="434.5,439.0 469.6,439.0 504.6,510.8 539.7,520.4 574.8,520.4 609.9,520.4 644.9,520.4 680.0,520.4 715.1,520.4 750.1,520.4 785.2,520.4 820.3,520.4 855.3,520.4 890.4,520.4 925.5,520.4 960.5,520.4 995.6,520.4 1030.7,520.4 1065.8,520.4 1100.8,505.6 1135.9,491.9 1171.0,511.8 1206.0,513.9 1241.1,512.4 1276.2,513.2 1311.2,438.8" fill="none" stroke="#f5a623" stroke-width="1.3"/><circle cx="434.5" cy="439.0" r="3.3" fill="#0000ff"/><circle cx="469.6" cy="439.0" r="3.3" fill="#0000ff"/><circle cx="504.6" cy="510.8" r="3.3" fill="#0000ff"/><circle cx="539.7" cy="520.4" r="3.3" fill="#0000ff"/><circle cx="574.8" cy="520.4" r="3.3" fill="#0000ff"/><circle cx="609.9" cy="520.4" r="3.3" fill="#0000ff"/><circle cx="644.9" cy="520.4" r="3.3" fill="#0000ff"/><circle cx="680.0" cy="520.4" r="3.3" fill="#0000ff"/><circle cx="715.1" cy="520.4" r="3.3" fill="#0000ff"/><circle cx="750.1" cy="520.4" r="3.3" fill="#0000ff"/><circle cx="785.2" cy="520.4" r="3.3" fill="#0000ff"/><circle cx="820.3" cy="520.4" r="3.3" fill="#0000ff"/><circle cx="855.3" cy="520.4" r="3.3" fill="#0000ff"/><circle cx="890.4" cy="520.4" r="3.3" fill="#0000ff"/><circle cx="925.5" cy="520.4" r="3.3" fill="#0000ff"/><circle cx="960.5" cy="520.4" r="3.3" fill="#0000ff"/><circle cx="995.6" cy="520.4" r="3.3" fill="#0000ff"/><circle cx="1030.7" cy="520.4" r="3.3" fill="#0000ff"/><circle cx="1065.8" cy="520.4" r="3.3" fill="#0000ff"/><circle cx="1100.8" cy="505.6" r="3.3" fill="#0000ff"/><circle cx="1135.9" cy="491.9" r="3.3" fill="#0000ff"/><circle cx="1171.0" cy="511.8" r="3.3" fill="#0000ff"/><circle cx="1206.0" cy="513.9" r="3.3" fill="#0000ff"/><circle cx="1241.1" cy="512.4" r="3.3" fill="#0000ff"/><circle cx="1276.2" cy="513.2" r="3.3" fill="#0000ff"/><circle cx="1311.2" cy="438.8" r="3.3" fill="#0000ff" stroke="#e0002a" stroke-width="1.2"/></svg></div><div class="t" style="left:380px;top:434px;width:51px;text-align:right;font-size:11px;color:#111">1020</div><div class="t" style="left:380px;top:482px;width:51px;text-align:right;font-size:11px;color:#111">510</div><div class="t" style="left:380px;top:533.5px;width:51px;text-align:right;font-size:11px;color:#111">0</div><div style="left:0;top:0;width:1490px;height:921px;overflow:hidden"><div class="t" style="left:440.8px;top:543px;width:80px;text-align:center;font-size:11px;color:#111;letter-spacing:0.6px">11:28:30</div></div><div style="left:0;top:0;width:1490px;height:921px;overflow:hidden"><div class="t" style="left:540.65px;top:543px;width:80px;text-align:center;font-size:11px;color:#111;letter-spacing:0.6px">11:31:20</div></div><div style="left:0;top:0;width:1490px;height:921px;overflow:hidden"><div class="t" style="left:640.5px;top:543px;width:80px;text-align:center;font-size:11px;color:#111;letter-spacing:0.6px">11:34:10</div></div><div style="left:0;top:0;width:1490px;height:921px;overflow:hidden"><div class="t" style="left:740.3499999999999px;top:543px;width:80px;text-align:center;font-size:11px;color:#111;letter-spacing:0.6px">11:37:00</div></div><div style="left:0;top:0;width:1490px;height:921px;overflow:hidden"><div class="t" style="left:840.2px;top:543px;width:80px;text-align:center;font-size:11px;color:#111;letter-spacing:0.6px">11:39:50</div></div><div style="left:0;top:0;width:1490px;height:921px;overflow:hidden"><div class="t" style="left:940.05px;top:543px;width:80px;text-align:center;font-size:11px;color:#111;letter-spacing:0.6px">11:42:40</div></div><div style="left:0;top:0;width:1490px;height:921px;overflow:hidden"><div class="t" style="left:1039.8999999999999px;top:543px;width:80px;text-align:center;font-size:11px;color:#111;letter-spacing:0.6px">11:45:30</div></div><div style="left:0;top:0;width:1490px;height:921px;overflow:hidden"><div class="t" style="left:1139.75px;top:543px;width:80px;text-align:center;font-size:11px;color:#111;letter-spacing:0.6px">11:48:20</div></div><div style="left:0;top:0;width:1490px;height:921px;overflow:hidden"><div class="t" style="left:1239.6px;top:543px;width:80px;text-align:center;font-size:11px;color:#111;letter-spacing:0.6px">11:51:10</div></div><div style="left:0;top:0;width:1490px;height:921px;overflow:hidden"><div class="t" style="left:1339.45px;top:543px;width:80px;text-align:center;font-size:11px;color:#111;letter-spacing:0.6px">11:54:00</div></div><div style="left:0;top:0;width:1490px;height:921px;overflow:hidden"><div class="t" style="left:1439.3px;top:543px;width:80px;text-align:center;font-size:11px;color:#111;letter-spacing:0.6px">11:56:50</div></div><svg style="left:1459px;top:433px" width="32" height="32" viewBox="0 0 32 32"><defs><radialGradient id="gmg" cx="0.4" cy="0.35" r="0.7"><stop offset="0" stop-color="#ffffff"/><stop offset="1" stop-color="#b8d0ec"/></radialGradient></defs><path d="M20 20 L28 28" stroke="#e8c878" stroke-width="5" stroke-linecap="round"/><circle cx="12" cy="12" r="10" fill="url(#gmg)" stroke="#a8bcd4" stroke-width="1.5"/></svg><div style="left:1500px;top:317px;width:17px;height:290px;background:linear-gradient(90deg,#f6f9fe,#e2ebf8)"></div><div style="left:1502px;top:318px;width:14px;height:14px;background:#f1f5fb;border:1px solid #dde6f2;border-radius:2px"></div><svg style="left:1505px;top:322px" width="9" height="6"><path d="M0.5 5 L4.5 1 L8.5 5" fill="none" stroke="#c5d2e4" stroke-width="1.3"/></svg><div style="left:1502px;top:591px;width:14px;height:14px;background:#f1f5fb;border:1px solid #dde6f2;border-radius:2px"></div><svg style="left:1505px;top:596px" width="9" height="6"><path d="M0.5 0.5 L4.5 4.5 L8.5 0.5" fill="none" stroke="#c5d2e4" stroke-width="1.3"/></svg><div style="left:370px;top:617px;width:1151px;height:304px;background:#fff;border:1px solid #92b4e0;border-top:none"></div><div style="left:370px;top:617px;width:1151px;height:23px;background:linear-gradient(#e6f0fd 0%,#dae8fb 30%,#cddff8 55%,#dbe8fa 100%);border:1px solid #8fb1dd;border-bottom:2px solid #9dbde6;border-radius:4px 4px 0 0"></div><div class="t" style="left:375px;top:622px;color:#2d5590;font-size:10.8px">Telegram Log</div><svg style="left:1491px;top:628px" width="8" height="5"><path d="M0 0 L8 0 L4 4.5 Z" fill="#1d4a85"/></svg><svg style="left:1506px;top:624px" width="8" height="12"><rect x="2" y="0.5" width="4" height="6.5" fill="#a9c1e0" stroke="#1d4a85" stroke-width="1"/><rect x="0.5" y="6.5" width="7" height="1.6" fill="#1d4a85"/><rect x="3.6" y="8" width="0.9" height="3.5" fill="#8fa6c4"/></svg><div style="left:371px;top:640px;width:1148px;height:28px;background:linear-gradient(#e7f0fd,#c4dbf8)"></div><div class="t" style="left:378px;top:646px;font-size:11.2px;color:#5476a6">View:</div><div style="left:409px;top:642px;width:51px;height:22px;background:#e2e5e9;border:1px solid #6a8cc0;border-radius:1px"></div><svg style="left:413px;top:645px" width="16" height="16" viewBox="0 0 16 16"><path d="M1 2 Q8 -0.5 15 2 L8 15 Z" fill="#7ad24a"/><path d="M2.5 4.5 Q8 3 13.5 4.5 M4 7.5 Q8 6.5 12 7.5 M5.5 10.5 Q8 10 10.5 10.5" stroke="#d8f4c4" stroke-width="1" fill="none"/></svg><div class="t" style="left:429px;top:646px;font-size:10.8px;color:#111">Radio</div><div style="left:513px;top:645px;width:1px;height:17px;background:#c6b79a"></div><svg style="left:0;top:0" width="1522" height="921"><path d="M463.5 648.2 L468.5 645.6 L468.5 650.8 Z" fill="#111"/><path d="M467.5 648.2 H470 V657.5 H473.5" fill="none" stroke="#222" stroke-width="1.3"/><path d="M478 657.5 L473 654.9 L473 660.1 Z" fill="#111"/></svg><div class="t" style="left:480px;top:646px;font-size:11.2px;color:#111">Serial</div><div style="left:516px;top:642px;width:55px;height:22px;background:#e2e5e9;border:1px solid #6a8cc0;border-radius:1px"></div><div class="t" style="left:519px;top:646px;font-size:11.2px;color:#111">Autoscroll</div><div class="t" style="left:575px;top:646px;font-size:11.2px;color:#111">Autoselect</div><div style="left:632px;top:645px;width:1px;height:17px;background:#c6b79a"></div><svg style="left:637px;top:643px" width="18" height="19" viewBox="0 0 18 19"><path d="M1.5 1 L7 7.5" stroke="#9a5a1a" stroke-width="2.4" stroke-linecap="round"/><path d="M5 6.5 L8.5 5 L17 12.5 Q15 16.5 11.5 18 L3.5 9.5 Z" fill="#f2cc38" stroke="#b8901a" stroke-width="0.6"/><path d="M6 10 L13 16 M8 8 L15 14" stroke="#d8a820" stroke-width="0.6"/><path d="M4.5 7.5 L8 5.8" stroke="#d05a20" stroke-width="1.3"/></svg><div class="t" style="left:656px;top:646px;font-size:11.2px;color:#111">Clear log</div><div style="left:706px;top:645px;width:1px;height:17px;background:#c6b79a"></div><svg style="left:712px;top:646px" width="16" height="13" viewBox="0 0 16 13"><path d="M0.5 2 H6 L7.5 3.5 H15.5 V12.5 H0.5 Z" fill="#f4d060" stroke="#c8a030" stroke-width="0.7"/><rect x="1.5" y="5" width="13" height="7" fill="#fbe68a"/></svg><div class="t" style="left:731px;top:646px;font-size:11.2px;color:#111">Log directory</div><div class="t" style="left:1276px;top:646.5px;font-size:11.2px;color:#5476a6">Telegram count:</div><svg style="left:1361px;top:648px" width="20" height="11" viewBox="0 0 20 11"><path d="M0 3.5 H12 V0 L19.5 5.5 L12 11 V7.5 H0 Z" fill="#4a70a8"/></svg><div class="t" style="left:1386px;top:646.5px;font-size:11.2px;color:#111">1734</div><svg style="left:1431px;top:648px" width="20" height="11" viewBox="0 0 20 11"><path d="M20 3.5 H8 V0 L0.5 5.5 L8 11 V7.5 H20 Z" fill="#a9bcd8"/></svg><div class="t" style="left:1455px;top:646.5px;font-size:11.2px;color:#111">0</div><svg style="left:1481px;top:646px" width="16" height="14" viewBox="0 0 16 14"><rect x="0.5" y="0.5" width="15" height="13" fill="#eef2f8" stroke="#8a9ab4" stroke-width="1"/><rect x="0.5" y="0.5" width="15" height="3" fill="#b8c8e0"/><path d="M0.5 6.5 H15.5 M0.5 9.5 H15.5 M5.5 3.5 V13.5 M10.5 3.5 V13.5" stroke="#b8c4d4" stroke-width="0.7"/></svg><div class="t" style="left:1500px;top:646.5px;font-size:11.2px;color:#111">27</div><div style="left:371px;top:668px;width:1132px;height:21px;background:#fff;border-bottom:1px solid #e3e6ea"></div><div class="t" style="left:371px;top:671.5px;width:51px;text-align:center;font-size:11px;color:#111;overflow:hidden">Direction</div><div style="left:422px;top:672px;width:1px;height:15px;background:#d5d9de"></div><div class="t" style="left:423px;top:671.5px;width:53px;text-align:center;font-size:11px;color:#111;overflow:hidden">Port</div><div style="left:476px;top:672px;width:1px;height:15px;background:#d5d9de"></div><div class="t" style="left:477px;top:671.5px;width:120px;text-align:center;font-size:11px;color:#111;overflow:hidden">Date Time</div><div style="left:597px;top:672px;width:1px;height:15px;background:#d5d9de"></div><div class="t" style="left:598px;top:671.5px;width:74px;text-align:center;font-size:11px;color:#111;overflow:hidden">ID</div><div style="left:672px;top:672px;width:1px;height:15px;background:#d5d9de"></div><div class="t" style="left:673px;top:671.5px;width:73px;text-align:center;font-size:11px;color:#111;overflow:hidden">RORG</div><div style="left:746px;top:672px;width:1px;height:15px;background:#d5d9de"></div><div class="t" style="left:747px;top:671.5px;width:199px;text-align:center;font-size:11px;color:#111;overflow:hidden">Data</div><div style="left:946px;top:672px;width:1px;height:15px;background:#d5d9de"></div><div class="t" style="left:947px;top:671.5px;width:80px;text-align:center;font-size:11px;color:#111;overflow:hidden">OptionalData</div><div style="left:1027px;top:672px;width:1px;height:15px;background:#d5d9de"></div><div class="t" style="left:1028px;top:671.5px;width:53px;text-align:center;font-size:11px;color:#111;overflow:hidden">Status</div><div style="left:1081px;top:672px;width:1px;height:15px;background:#d5d9de"></div><div class="t" style="left:1082px;top:671.5px;width:55px;text-align:center;font-size:11px;color:#111;overflow:hidden">dBm</div><div style="left:1137px;top:672px;width:1px;height:15px;background:#d5d9de"></div><div class="t" style="left:1138px;top:671.5px;width:53px;text-align:center;font-size:11px;color:#111;overflow:hidden">Subtel</div><div style="left:1191px;top:672px;width:1px;height:15px;background:#d5d9de"></div><div class="t" style="left:1192px;top:671.5px;width:73px;text-align:center;font-size:11px;color:#111;overflow:hidden">DestinationID</div><div style="left:1265px;top:672px;width:1px;height:15px;background:#d5d9de"></div><div class="t" style="left:1266px;top:671.5px;width:75px;text-align:center;font-size:11px;color:#111;overflow:hidden">Security</div><div style="left:1341px;top:672px;width:1px;height:15px;background:#d5d9de"></div><div class="t" style="left:1342px;top:671.5px;width:76px;text-align:center;font-size:11px;color:#111;overflow:hidden">TimeDiff.</div><div style="left:1418px;top:672px;width:1px;height:15px;background:#d5d9de"></div><svg style="left:658px;top:673px" width="11" height="11" viewBox="0 0 11 11"><path d="M0.5 0.5 H10.5 L6.5 5 V10.5 L4.5 9 V5 Z" fill="#f0c020" stroke="#8a7020" stroke-width="0.7"/></svg><svg style="left:734px;top:673px" width="11" height="11" viewBox="0 0 11 11"><path d="M0.5 0.5 H10.5 L6.5 5 V10.5 L4.5 9 V5 Z" fill="#c8c8c8" stroke="#7a7a7a" stroke-width="0.7"/></svg><svg style="left:410px;top:673px" width="11" height="11" viewBox="0 0 11 11"><path d="M0.5 0.5 H10.5 L6.5 5 V10.5 L4.5 9 V5 Z" fill="#c8c8c8" stroke="#7a7a7a" stroke-width="0.7"/></svg><svg style="left:1068px;top:673px" width="11" height="11" viewBox="0 0 11 11"><path d="M0.5 0.5 H10.5 L6.5 5 V10.5 L4.5 9 V5 Z" fill="#c8c8c8" stroke="#7a7a7a" stroke-width="0.7"/></svg><svg style="left:1252px;top:673px" width="11" height="11" viewBox="0 0 11 11"><path d="M0.5 0.5 H10.5 L6.5 5 V10.5 L4.5 9 V5 Z" fill="#c8c8c8" stroke="#7a7a7a" stroke-width="0.7"/></svg><svg style="left:388px;top:692.1px" width="19" height="11" viewBox="0 0 19 11"><path d="M0 3 H11 V0 L18.5 5.3 L11 10.6 V7.6 H0 Z" fill="#4a6fa8"/></svg><div class="t" style="left:429px;top:690.1px;font-size:11px;color:#111">COM4</div><div class="t" style="left:483px;top:690.1px;width:109px;overflow:hidden;font-size:11px;color:#111">2024-08-06 11:40:07.523</div><div class="t" style="left:604px;top:690.1px;font-size:11px;color:#111">04217B14</div><div class="t" style="left:679px;top:690.1px;font-size:11px;color:#111">4BS</div><div class="t" style="left:754px;top:690.1px;font-family:&quot;Liberation Mono&quot;,monospace;font-size:10.8px;color:#555;white-space:pre">87 00 2F 08</div><div class="t" style="left:1033px;top:690.1px;font-size:11px;color:#111">80</div><div class="t" style="left:1088px;top:690.1px;font-size:11px;color:#111">-44</div><div class="t" style="left:1143px;top:690.1px;font-size:11px;color:#111">2</div><div class="t" style="left:1199px;top:690.1px;font-size:11px;color:#111;transform:scaleX(0.85);transform-origin:0 50%">FFFFFFFF</div><div class="t" style="left:1273px;top:690.1px;font-size:11px;color:#111">N/A</div><div class="t" style="left:1347px;top:690.1px;font-size:11px;color:#111">00:00:59.790</div><div style="left:371px;top:704px;width:1132px;height:15px;background:#dce3ec"></div><svg style="left:388px;top:707.4px" width="19" height="11" viewBox="0 0 19 11"><path d="M0 3 H11 V0 L18.5 5.3 L11 10.6 V7.6 H0 Z" fill="#4a6fa8"/></svg><div class="t" style="left:429px;top:705.4px;font-size:11px;color:#111">COM4</div><div class="t" style="left:483px;top:705.4px;width:109px;overflow:hidden;font-size:11px;color:#111">2024-08-06 11:41:07.523</div><div class="t" style="left:604px;top:705.4px;font-size:11px;color:#111">04217B14</div><div class="t" style="left:679px;top:705.4px;font-size:11px;color:#111">4BS</div><div class="t" style="left:754px;top:705.4px;font-family:&quot;Liberation Mono&quot;,monospace;font-size:10.8px;color:#555;white-space:pre">87 00 2F 08</div><div class="t" style="left:1033px;top:705.4px;font-size:11px;color:#111">80</div><div class="t" style="left:1088px;top:705.4px;font-size:11px;color:#111">-44</div><div class="t" style="left:1143px;top:705.4px;font-size:11px;color:#111">6</div><div class="t" style="left:1199px;top:705.4px;font-size:11px;color:#111;transform:scaleX(0.85);transform-origin:0 50%">FFFFFFFF</div><div class="t" style="left:1273px;top:705.4px;font-size:11px;color:#111">N/A</div><div class="t" style="left:1347px;top:705.4px;font-size:11px;color:#111">00:00:59.728</div><svg style="left:388px;top:722.7px" width="19" height="11" viewBox="0 0 19 11"><path d="M0 3 H11 V0 L18.5 5.3 L11 10.6 V7.6 H0 Z" fill="#4a6fa8"/></svg><div class="t" style="left:429px;top:720.7px;font-size:11px;color:#111">COM4</div><div class="t" style="left:483px;top:720.7px;width:109px;overflow:hidden;font-size:11px;color:#111">2024-08-06 11:42:06.523</div><div class="t" style="left:604px;top:720.7px;font-size:11px;color:#111">04217B14</div><div class="t" style="left:679px;top:720.7px;font-size:11px;color:#111">4BS</div><div class="t" style="left:754px;top:720.7px;font-family:&quot;Liberation Mono&quot;,monospace;font-size:10.8px;color:#555;white-space:pre">87 00 2F 08</div><div class="t" style="left:1033px;top:720.7px;font-size:11px;color:#111">80</div><div class="t" style="left:1088px;top:720.7px;font-size:11px;color:#111">-44</div><div class="t" style="left:1143px;top:720.7px;font-size:11px;color:#111">2</div><div class="t" style="left:1199px;top:720.7px;font-size:11px;color:#111;transform:scaleX(0.85);transform-origin:0 50%">FFFFFFFF</div><div class="t" style="left:1273px;top:720.7px;font-size:11px;color:#111">N/A</div><div class="t" style="left:1347px;top:720.7px;font-size:11px;color:#111">00:00:59.755</div><div style="left:371px;top:734px;width:1132px;height:15px;background:#dce3ec"></div><svg style="left:388px;top:738.0px" width="19" height="11" viewBox="0 0 19 11"><path d="M0 3 H11 V0 L18.5 5.3 L11 10.6 V7.6 H0 Z" fill="#4a6fa8"/></svg><div class="t" style="left:429px;top:736.0px;font-size:11px;color:#111">COM4</div><div class="t" style="left:483px;top:736.0px;width:109px;overflow:hidden;font-size:11px;color:#111">2024-08-06 11:43:06.523</div><div class="t" style="left:604px;top:736.0px;font-size:11px;color:#111">04217B14</div><div class="t" style="left:679px;top:736.0px;font-size:11px;color:#111">4BS</div><div class="t" style="left:754px;top:736.0px;font-family:&quot;Liberation Mono&quot;,monospace;font-size:10.8px;color:#555;white-space:pre">87 00 2F 08</div><div class="t" style="left:1033px;top:736.0px;font-size:11px;color:#111">80</div><div class="t" style="left:1088px;top:736.0px;font-size:11px;color:#111">-44</div><div class="t" style="left:1143px;top:736.0px;font-size:11px;color:#111">6</div><div class="t" style="left:1199px;top:736.0px;font-size:11px;color:#111;transform:scaleX(0.85);transform-origin:0 50%">FFFFFFFF</div><div class="t" style="left:1273px;top:736.0px;font-size:11px;color:#111">N/A</div><div class="t" style="left:1347px;top:736.0px;font-size:11px;color:#111">00:00:59.766</div><svg style="left:388px;top:753.3px" width="19" height="11" viewBox="0 0 19 11"><path d="M0 3 H11 V0 L18.5 5.3 L11 10.6 V7.6 H0 Z" fill="#4a6fa8"/></svg><div class="t" style="left:429px;top:751.3000000000001px;font-size:11px;color:#111">COM4</div><div class="t" style="left:483px;top:751.3px;width:109px;overflow:hidden;font-size:11px;color:#111">2024-08-06 11:44:06.523</div><div class="t" style="left:604px;top:751.3000000000001px;font-size:11px;color:#111">04217B14</div><div class="t" style="left:679px;top:751.3000000000001px;font-size:11px;color:#111">4BS</div><div class="t" style="left:754px;top:751.3000000000001px;font-family:&quot;Liberation Mono&quot;,monospace;font-size:10.8px;color:#555;white-space:pre">87 00 2F 08</div><div class="t" style="left:1033px;top:751.3000000000001px;font-size:11px;color:#111">80</div><div class="t" style="left:1088px;top:751.3000000000001px;font-size:11px;color:#111">-44</div><div class="t" style="left:1143px;top:751.3000000000001px;font-size:11px;color:#111">5</div><div class="t" style="left:1199px;top:751.3000000000001px;font-size:11px;color:#111;transform:scaleX(0.85);transform-origin:0 50%">FFFFFFFF</div><div class="t" style="left:1273px;top:751.3000000000001px;font-size:11px;color:#111">N/A</div><div class="t" style="left:1347px;top:751.3000000000001px;font-size:11px;color:#111">00:00:59.779</div><div style="left:371px;top:765px;width:1132px;height:15px;background:#dce3ec"></div><svg style="left:388px;top:768.6px" width="19" height="11" viewBox="0 0 19 11"><path d="M0 3 H11 V0 L18.5 5.3 L11 10.6 V7.6 H0 Z" fill="#4a6fa8"/></svg><div class="t" style="left:429px;top:766.6px;font-size:11px;color:#111">COM4</div><div class="t" style="left:483px;top:766.6px;width:109px;overflow:hidden;font-size:11px;color:#111">2024-08-06 11:45:06.523</div><div class="t" style="left:604px;top:766.6px;font-size:11px;color:#111">04217B14</div><div class="t" style="left:679px;top:766.6px;font-size:11px;color:#111">4BS</div><div class="t" style="left:754px;top:766.6px;font-family:&quot;Liberation Mono&quot;,monospace;font-size:10.8px;color:#555;white-space:pre">88 00 2F 08</div><div class="t" style="left:1033px;top:766.6px;font-size:11px;color:#111">80</div><div class="t" style="left:1088px;top:766.6px;font-size:11px;color:#111">-45</div><div class="t" style="left:1143px;top:766.6px;font-size:11px;color:#111">4</div><div class="t" style="left:1199px;top:766.6px;font-size:11px;color:#111;transform:scaleX(0.85);transform-origin:0 50%">FFFFFFFF</div><div class="t" style="left:1273px;top:766.6px;font-size:11px;color:#111">N/A</div><div class="t" style="left:1347px;top:766.6px;font-size:11px;color:#111">00:00:59.745</div><svg style="left:388px;top:783.9px" width="19" height="11" viewBox="0 0 19 11"><path d="M0 3 H11 V0 L18.5 5.3 L11 10.6 V7.6 H0 Z" fill="#4a6fa8"/></svg><div class="t" style="left:429px;top:781.9000000000001px;font-size:11px;color:#111">COM4</div><div class="t" style="left:483px;top:781.9px;width:109px;overflow:hidden;font-size:11px;color:#111">2024-08-06 11:46:05.523</div><div class="t" style="left:604px;top:781.9000000000001px;font-size:11px;color:#111">04217B14</div><div class="t" style="left:679px;top:781.9000000000001px;font-size:11px;color:#111">4BS</div><div class="t" style="left:754px;top:781.9000000000001px;font-family:&quot;Liberation Mono&quot;,monospace;font-size:10.8px;color:#555;white-space:pre">87 00 54 08</div><div class="t" style="left:1033px;top:781.9000000000001px;font-size:11px;color:#111">80</div><div class="t" style="left:1088px;top:781.9000000000001px;font-size:11px;color:#111">-46</div><div class="t" style="left:1143px;top:781.9000000000001px;font-size:11px;color:#111">5</div><div class="t" style="left:1199px;top:781.9000000000001px;font-size:11px;color:#111;transform:scaleX(0.85);transform-origin:0 50%">FFFFFFFF</div><div class="t" style="left:1273px;top:781.9000000000001px;font-size:11px;color:#111">N/A</div><div class="t" style="left:1347px;top:781.9000000000001px;font-size:11px;color:#111">00:00:59.749</div><div style="left:371px;top:796px;width:1132px;height:15px;background:#dce3ec"></div><svg style="left:388px;top:799.2px" width="19" height="11" viewBox="0 0 19 11"><path d="M0 3 H11 V0 L18.5 5.3 L11 10.6 V7.6 H0 Z" fill="#4a6fa8"/></svg><div class="t" style="left:429px;top:797.2px;font-size:11px;color:#111">COM4</div><div class="t" style="left:483px;top:797.2px;width:109px;overflow:hidden;font-size:11px;color:#111">2024-08-06 11:47:05.523</div><div class="t" style="left:604px;top:797.2px;font-size:11px;color:#111">04217B14</div><div class="t" style="left:679px;top:797.2px;font-size:11px;color:#111">4BS</div><div class="t" style="left:754px;top:797.2px;font-family:&quot;Liberation Mono&quot;,monospace;font-size:10.8px;color:#555;white-space:pre">8C 00 77 08</div><div class="t" style="left:1033px;top:797.2px;font-size:11px;color:#111">80</div><div class="t" style="left:1088px;top:797.2px;font-size:11px;color:#111">-44</div><div class="t" style="left:1143px;top:797.2px;font-size:11px;color:#111">4</div><div class="t" style="left:1199px;top:797.2px;font-size:11px;color:#111;transform:scaleX(0.85);transform-origin:0 50%">FFFFFFFF</div><div class="t" style="left:1273px;top:797.2px;font-size:11px;color:#111">N/A</div><div class="t" style="left:1347px;top:797.2px;font-size:11px;color:#111">00:00:59.781</div><svg style="left:388px;top:814.5px" width="19" height="11" viewBox="0 0 19 11"><path d="M0 3 H11 V0 L18.5 5.3 L11 10.6 V7.6 H0 Z" fill="#4a6fa8"/></svg><div class="t" style="left:429px;top:812.5px;font-size:11px;color:#111">COM4</div><div class="t" style="left:483px;top:812.5px;width:109px;overflow:hidden;font-size:11px;color:#111">2024-08-06 11:48:05.523</div><div class="t" style="left:604px;top:812.5px;font-size:11px;color:#111">04217B14</div><div class="t" style="left:679px;top:812.5px;font-size:11px;color:#111">4BS</div><div class="t" style="left:754px;top:812.5px;font-family:&quot;Liberation Mono&quot;,monospace;font-size:10.8px;color:#555;white-space:pre">87 00 44 08</div><div class="t" style="left:1033px;top:812.5px;font-size:11px;color:#111">80</div><div class="t" style="left:1088px;top:812.5px;font-size:11px;color:#111">-42</div><div class="t" style="left:1143px;top:812.5px;font-size:11px;color:#111">5</div><div class="t" style="left:1199px;top:812.5px;font-size:11px;color:#111;transform:scaleX(0.85);transform-origin:0 50%">FFFFFFFF</div><div class="t" style="left:1273px;top:812.5px;font-size:11px;color:#111">N/A</div><div class="t" style="left:1347px;top:812.5px;font-size:11px;color:#111">00:00:59.785</div><div style="left:371px;top:826px;width:1132px;height:15px;background:#dce3ec"></div><svg style="left:388px;top:829.8px" width="19" height="11" viewBox="0 0 19 11"><path d="M0 3 H11 V0 L18.5 5.3 L11 10.6 V7.6 H0 Z" fill="#4a6fa8"/></svg><div class="t" style="left:429px;top:827.8000000000001px;font-size:11px;color:#111">COM4</div><div class="t" style="left:483px;top:827.8px;width:109px;overflow:hidden;font-size:11px;color:#111">2024-08-06 11:49:05.523</div><div class="t" style="left:604px;top:827.8000000000001px;font-size:11px;color:#111">04217B14</div><div class="t" style="left:679px;top:827.8000000000001px;font-size:11px;color:#111">4BS</div><div class="t" style="left:754px;top:827.8000000000001px;font-family:&quot;Liberation Mono&quot;,monospace;font-size:10.8px;color:#555;white-space:pre">88 00 3F 08</div><div class="t" style="left:1033px;top:827.8000000000001px;font-size:11px;color:#111">80</div><div class="t" style="left:1088px;top:827.8000000000001px;font-size:11px;color:#111">-42</div><div class="t" style="left:1143px;top:827.8000000000001px;font-size:11px;color:#111">4</div><div class="t" style="left:1199px;top:827.8000000000001px;font-size:11px;color:#111;transform:scaleX(0.85);transform-origin:0 50%">FFFFFFFF</div><div class="t" style="left:1273px;top:827.8000000000001px;font-size:11px;color:#111">N/A</div><div class="t" style="left:1347px;top:827.8000000000001px;font-size:11px;color:#111">00:00:59.729</div><svg style="left:388px;top:845.1px" width="19" height="11" viewBox="0 0 19 11"><path d="M0 3 H11 V0 L18.5 5.3 L11 10.6 V7.6 H0 Z" fill="#4a6fa8"/></svg><div class="t" style="left:429px;top:843.1px;font-size:11px;color:#111">COM4</div><div class="t" style="left:483px;top:843.1px;width:109px;overflow:hidden;font-size:11px;color:#111">2024-08-06 11:50:04.523</div><div class="t" style="left:604px;top:843.1px;font-size:11px;color:#111">04217B14</div><div class="t" style="left:679px;top:843.1px;font-size:11px;color:#111">4BS</div><div class="t" style="left:754px;top:843.1px;font-family:&quot;Liberation Mono&quot;,monospace;font-size:10.8px;color:#555;white-space:pre">88 00 43 08</div><div class="t" style="left:1033px;top:843.1px;font-size:11px;color:#111">80</div><div class="t" style="left:1088px;top:843.1px;font-size:11px;color:#111">-42</div><div class="t" style="left:1143px;top:843.1px;font-size:11px;color:#111">3</div><div class="t" style="left:1199px;top:843.1px;font-size:11px;color:#111;transform:scaleX(0.85);transform-origin:0 50%">FFFFFFFF</div><div class="t" style="left:1273px;top:843.1px;font-size:11px;color:#111">N/A</div><div class="t" style="left:1347px;top:843.1px;font-size:11px;color:#111">00:00:59.767</div><div style="left:371px;top:857px;width:1132px;height:15px;background:#dce3ec"></div><svg style="left:388px;top:860.4px" width="19" height="11" viewBox="0 0 19 11"><path d="M0 3 H11 V0 L18.5 5.3 L11 10.6 V7.6 H0 Z" fill="#4a6fa8"/></svg><div class="t" style="left:429px;top:858.4000000000001px;font-size:11px;color:#111">COM4</div><div class="t" style="left:483px;top:858.4px;width:109px;overflow:hidden;font-size:11px;color:#111">2024-08-06 11:51:04.523</div><div class="t" style="left:604px;top:858.4000000000001px;font-size:11px;color:#111">04217B14</div><div class="t" style="left:679px;top:858.4000000000001px;font-size:11px;color:#111">4BS</div><div class="t" style="left:754px;top:858.4000000000001px;font-family:&quot;Liberation Mono&quot;,monospace;font-size:10.8px;color:#555;white-space:pre">88 00 40 08</div><div class="t" style="left:1033px;top:858.4000000000001px;font-size:11px;color:#111">80</div><div class="t" style="left:1088px;top:858.4000000000001px;font-size:11px;color:#111">-42</div><div class="t" style="left:1143px;top:858.4000000000001px;font-size:11px;color:#111">6</div><div class="t" style="left:1199px;top:858.4000000000001px;font-size:11px;color:#111;transform:scaleX(0.85);transform-origin:0 50%">FFFFFFFF</div><div class="t" style="left:1273px;top:858.4000000000001px;font-size:11px;color:#111">N/A</div><div class="t" style="left:1347px;top:858.4000000000001px;font-size:11px;color:#111">00:00:59.776</div><svg style="left:388px;top:875.7px" width="19" height="11" viewBox="0 0 19 11"><path d="M0 3 H11 V0 L18.5 5.3 L11 10.6 V7.6 H0 Z" fill="#4a6fa8"/></svg><div class="t" style="left:429px;top:873.7px;font-size:11px;color:#111">COM4</div><div class="t" style="left:483px;top:873.7px;width:109px;overflow:hidden;font-size:11px;color:#111">2024-08-06 11:52:04.523</div><div class="t" style="left:604px;top:873.7px;font-size:11px;color:#111">04217B14</div><div class="t" style="left:679px;top:873.7px;font-size:11px;color:#111">4BS</div><div class="t" style="left:754px;top:873.7px;font-family:&quot;Liberation Mono&quot;,monospace;font-size:10.8px;color:#555;white-space:pre">88 00 FF 08</div><div class="t" style="left:1033px;top:873.7px;font-size:11px;color:#111">80</div><div class="t" style="left:1088px;top:873.7px;font-size:11px;color:#111">-45</div><div class="t" style="left:1143px;top:873.7px;font-size:11px;color:#111">5</div><div class="t" style="left:1199px;top:873.7px;font-size:11px;color:#111;transform:scaleX(0.85);transform-origin:0 50%">FFFFFFFF</div><div class="t" style="left:1273px;top:873.7px;font-size:11px;color:#111">N/A</div><div class="t" style="left:1347px;top:873.7px;font-size:11px;color:#111">00:00:59.724</div><div style="left:1503px;top:668px;width:17px;height:226px;background:#eef2f7"></div><div style="left:1504px;top:669px;width:15px;height:15px;background:linear-gradient(#fbfcfe,#dde6f2);border:1px solid #a9b9d0;border-radius:3px"></div><svg style="left:1507px;top:673px" width="9" height="6"><path d="M0.8 5 L4.5 1 L8.2 5" fill="none" stroke="#3c4e6a" stroke-width="1.5"/></svg><div style="left:1504px;top:785px;width:15px;height:91px;background:linear-gradient(90deg,#f6f8fc,#dfe7f2);border:1px solid #a9b9d0;border-radius:3px"></div><svg style="left:1508px;top:828px" width="7" height="5"><path d="M0 0.5 H7 M0 2.5 H7 M0 4.5 H7" stroke="#8a9ab0" stroke-width="0.7"/></svg><div style="left:1504px;top:877px;width:15px;height:15px;background:linear-gradient(#fbfcfe,#dde6f2);border:1px solid #a9b9d0;border-radius:3px"></div><svg style="left:1507px;top:882px" width="9" height="6"><path d="M0.8 0.8 L4.5 4.5 L8.2 0.8" fill="none" stroke="#3c4e6a" stroke-width="1.5"/></svg><div style="left:371px;top:894px;width:1149px;height:27px;background:#bfdbff;border-top:1px solid #86a9d8"></div><div style="left:371px;top:896px;width:74px;height:22px;background:linear-gradient(#fbfcfe,#e8eef6);border:1px solid #a9c0de;border-top:none;border-radius:0 0 3px 3px"></div><div class="t" style="left:374px;top:900px;font-size:11.1px;color:#111">Telegram Log</div><div style="left:445px;top:896px;width:129px;height:20px;background:linear-gradient(#e6eefa,#d2e2f8);border:1px solid #a9c0de;border-top:none;border-radius:0 0 3px 3px"></div><div class="t" style="left:447px;top:899.5px;font-size:10.8px;color:#2d5590">RemoteManagement Log</div><div style="left:0px;top:919px;width:1522px;height:2px;background:#d0d0d0"></div></body></html>
